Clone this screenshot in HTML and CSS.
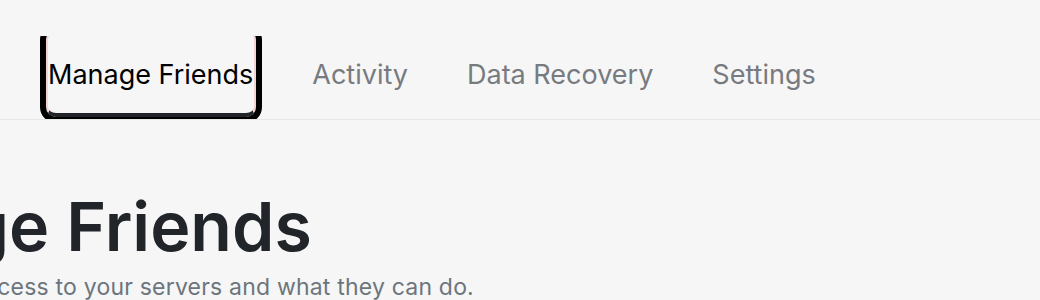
FILE: index.html
```html
<!DOCTYPE html>
<html lang="en">
<head>
<meta charset="utf-8">
<title>Manage Friends</title>
<link rel="stylesheet" href="styles.css">
</head>
<body>
<nav class="tabs">
  <a class="tab tab-active" href="#">Manage Friends</a>
  <a class="tab" href="#">Activity</a>
  <a class="tab" href="#">Data Recovery</a>
  <a class="tab" href="#">Settings</a>
</nav>
<header class="page-header">
  <h1 class="page-title">Manage Friends</h1>
  <p class="page-subtitle">Control who has access to your servers and what they can do.</p>
</header>
</body>
</html>
```

FILE: styles.css
```css
html, body {
  margin: 0;
  padding: 0;
  background: #f6f6f6;
  font-family: Inter, "Noto Sans", sans-serif;
  overflow: hidden;
}

.tabs {
  display: flex;
  gap: 54px;
  margin-top: 36px;
  height: 83px;
  padding-left: 46px;
  overflow: hidden;
  border-bottom: 1px solid #e6e6e6;
}

.tab {
  box-sizing: border-box;
  display: flex;
  align-items: center;
  height: 87px;
  margin-top: -6px;
  padding: 4px 1px 0 0;
  border: 2px solid transparent;
  border-bottom: 4px solid transparent;
  border-radius: 10px;
  font-size: 27px;
  line-height: 1;
  color: #777b80;
  text-decoration: none;
  white-space: nowrap;
}

.tab-active {
  color: #000;
  border-color: #f2d4d4;
  border-bottom-color: #212529;
  outline: 6px solid #000;
}

.page-header {
  margin-left: -216px;
}

.page-title {
  margin: 66px 0 0;
  font-size: 68px;
  line-height: 1.2;
  font-weight: 600;
  color: #212529;
  white-space: nowrap;
}

.page-subtitle {
  margin: 2px 0 0;
  font-size: 23px;
  letter-spacing: 0.2px;
  line-height: 1.5;
  color: #6c757d;
  white-space: nowrap;
}
```
